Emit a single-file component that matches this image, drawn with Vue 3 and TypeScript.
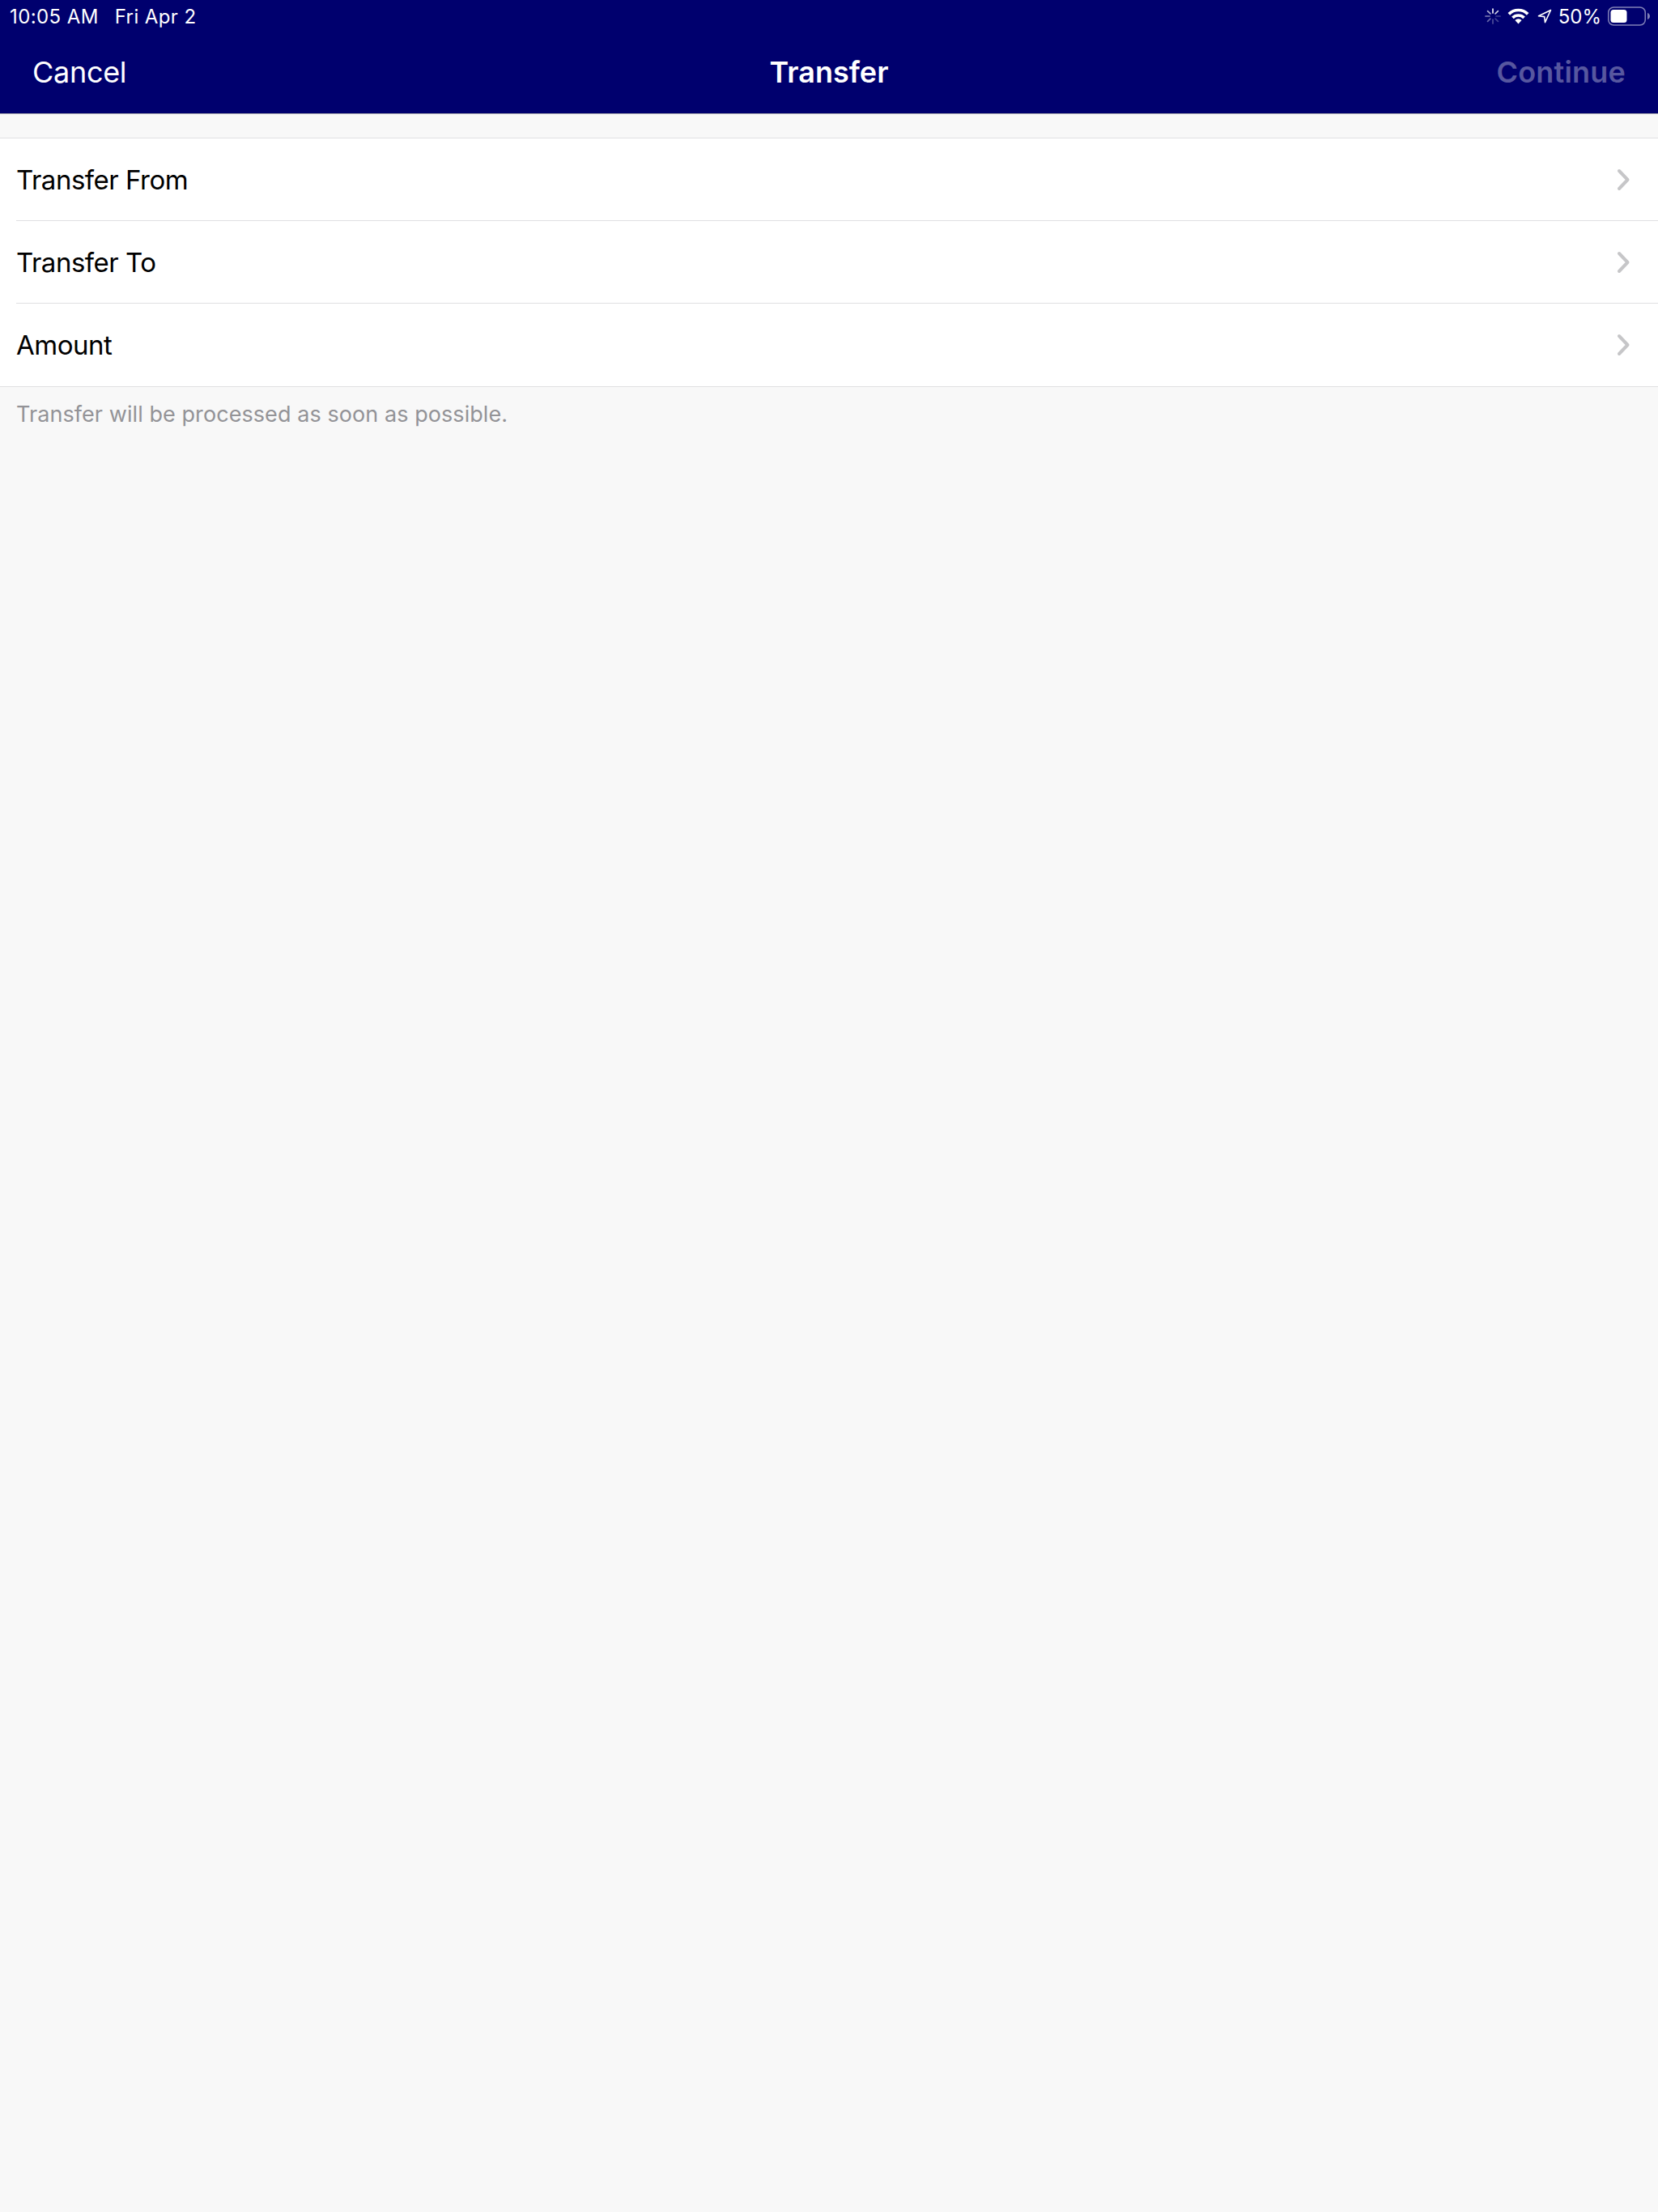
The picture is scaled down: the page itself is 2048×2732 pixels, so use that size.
<script setup lang="ts">
const rows: string[] = ['Transfer From', 'Transfer To', 'Amount']
</script>

<template>
  <div class="page">
    <header class="top">
      <div class="status">
        <div class="status-left"><span>10:05 AM</span><span>Fri Apr 2</span></div>
        <div class="status-right">
          <svg class="spin" width="20" height="20" viewBox="0 0 20 20">
            <g stroke="#fff" stroke-width="1.7" stroke-linecap="round">
              <path d="M10 1v5" opacity=".95" />
              <path d="M16.4 3.600l-3.300 3.300" opacity=".8" />
              <path d="M19 10h-5" opacity=".25" />
              <path d="M16.400 16.400l-3.300-3.300" opacity=".25" />
              <path d="M10 19v-5" opacity=".3" />
              <path d="M3.600 16.400l3.300-3.300" opacity=".4" />
              <path d="M1 10h5" opacity=".5" />
              <path d="M3.600 3.600l3.300 3.300" opacity=".65" />
            </g>
          </svg>
          <svg class="wifi" width="27" height="20" viewBox="0 0 27 20">
            <g fill="none" stroke="#fff" stroke-width="3.700">
              <path d="M1.830 7.330a16.500 16.500 0 0 1 23.340 0" />
              <path d="M6.430 11.930a10 10 0 0 1 14.140 0" />
            </g>
            <path d="M9.400 14.900a5.800 5.800 0 0 1 8.200 0L13.500 19.400z" fill="#fff" />
          </svg>
          <svg class="loc" width="18" height="18" viewBox="0 0 18 18">
            <path d="M16.500 1.500 1.500 8.800l7.200.8.800 7z" fill="none" stroke="#fff" stroke-width="1.600" stroke-linejoin="round" />
          </svg>
          <span class="pct">50%</span>
          <svg class="batt" width="52" height="24" viewBox="0 0 52 24">
            <rect x=".75" y="1" width="45.500" height="22" rx="6.500" fill="none" stroke="#fff" stroke-opacity=".5" stroke-width="1.500" />
            <rect x="3.500" y="4" width="20" height="16" rx="3.500" fill="#fff" />
            <path d="M49 8c1.800.6 3 2.200 3 4s-1.200 3.400-3 4z" fill="#fff" fill-opacity=".5" />
          </svg>
        </div>
      </div>
      <nav class="nav">
        <span class="cancel">Cancel</span>
        <span class="title">Transfer</span>
        <span class="continue">Continue</span>
      </nav>
    </header>
    <main class="body">
      <ul class="list">
        <li v-for="row in rows" :key="row" class="row">
          <div class="row-inner">
            <span>{{ row }}</span>
            <svg width="18" height="28" viewBox="0 0 18 28">
              <path d="M3 3l10.500 11L3 25" fill="none" stroke="#c6c6c8" stroke-width="4" stroke-linecap="round" stroke-linejoin="round" />
            </svg>
          </div>
        </li>
      </ul>
      <p class="note">Transfer will be processed as soon as possible.</p>
    </main>
  </div>
</template>

<style scoped>
.page {
  width: 2048px;
  height: 2732px;
  display: flex;
  flex-direction: column;
  background: #f8f8f8;
  font-family: Inter, "Liberation Sans", sans-serif;
}
.top {
  height: 140px;
  box-sizing: content-box;
  background: #00006e;
  border-bottom: 1px solid #b4b4b4;
  color: #fff;
  display: flex;
  flex-direction: column;
}
.status {
  height: 40px;
  display: flex;
  justify-content: space-between;
  align-items: center;
  padding: 0 10px 0 12px;
  font-size: 24px;
  letter-spacing: 0.4px;
}
.status-left {
  display: flex;
  gap: 20px;
}
.status-right {
  display: flex;
  align-items: center;
}
.wifi {
  margin-left: 8px;
}
.loc {
  margin-left: 10px;
}
.pct {
  margin-left: 8px;
  margin-right: 8px;
  letter-spacing: 0;
}
.nav {
  flex: 1;
  display: flex;
  align-items: center;
  justify-content: space-between;
  padding: 0 40px 3px;
  font-size: 36px;
  position: relative;
}
.cancel {
  letter-spacing: -0.3px;
}
.title {
  position: absolute;
  left: 0;
  right: 0;
  text-align: center;
  font-weight: 600;
}
.continue {
  font-weight: 600;
  letter-spacing: 0.2px;
  color: rgba(255, 255, 255, 0.35);
}
.body {
  flex: 1;
  padding-top: 29px;
}
.list {
  list-style: none;
  margin: 0;
  padding: 0;
  background: #fff;
  border-top: 1px solid #e0e0e2;
  border-bottom: 1px solid #e0e0e2;
}
.row {
  padding-left: 20px;
}
.row-inner {
  box-sizing: border-box;
  height: 102px;
  display: flex;
  align-items: center;
  justify-content: space-between;
  padding-right: 33px;
  font-size: 33px;
  letter-spacing: -0.5px;
  color: #000;
  border-bottom: 1px solid #e0e0e2;
}
.row:last-child .row-inner {
  border-bottom: 0;
}
.note {
  margin: 17px 0 0 20px;
  font-size: 27px;
  letter-spacing: 0.07px;
  color: #939397;
}
</style>
